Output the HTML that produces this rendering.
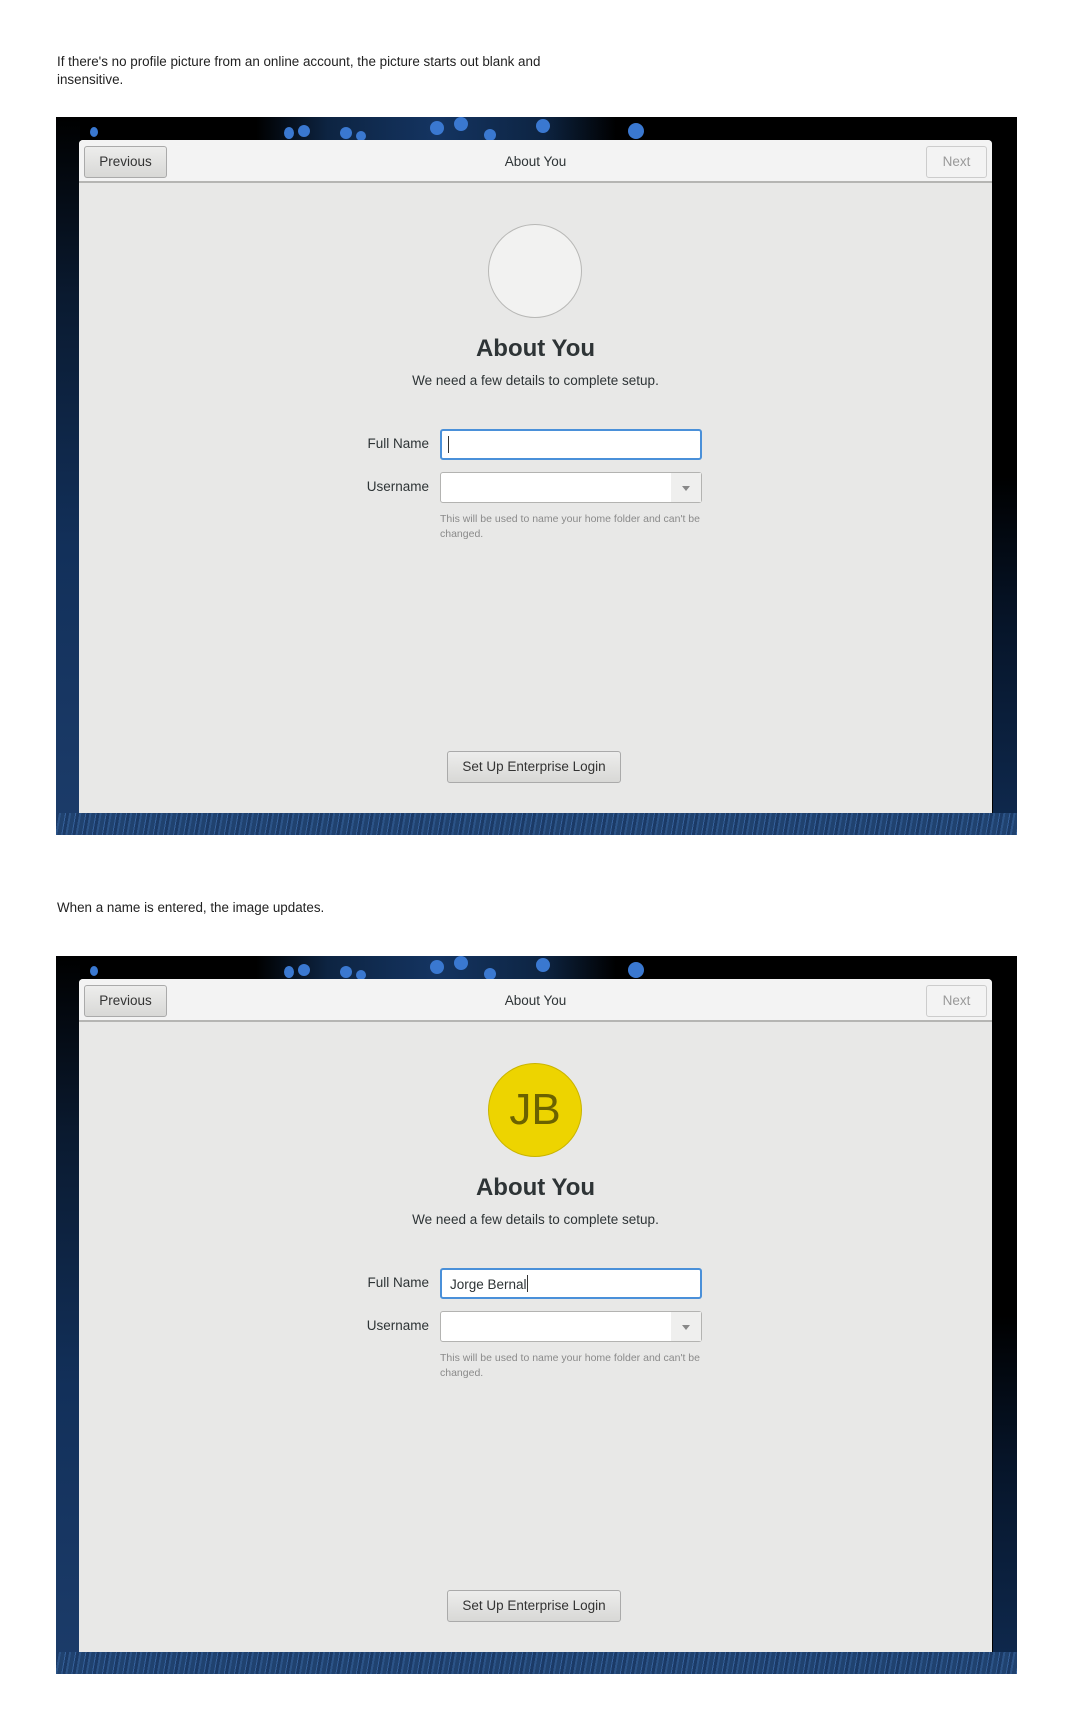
<!DOCTYPE html>
<html><head><meta charset="utf-8"><style>
*{margin:0;padding:0;box-sizing:border-box}
body{width:1072px;height:1731px;background:#fff;position:relative;font-family:"Liberation Sans","DejaVu Sans",sans-serif;overflow:hidden}
.cap{position:absolute;left:57px;font-size:13.4px;line-height:18px;color:#222}
.shot{position:absolute;left:56px;width:961px;height:718px;background:#000;overflow:hidden}
.lstrip{position:absolute;left:0;top:0;width:24px;height:100%;background:linear-gradient(180deg,#000 0%,#0a1a30 25%,#12305a 60%,#1c3c6a 100%)}
.bstrip{position:absolute;left:0;bottom:0;width:100%;height:22px;background:repeating-linear-gradient(100deg,#1b3a66 0 3px,#2c5488 3px 5px,#20426f 5px 9px,#35609a 9px 10px)}
.rstrip{position:absolute;right:0;top:0;width:24px;height:100%;background:linear-gradient(180deg,#000 0%,#000 50%,#061428 70%,#0f2a50 100%)}
.dot{position:absolute;border-radius:50%;background:#3a78d0}
.haze{position:absolute;top:0;left:200px;width:360px;height:24px;background:linear-gradient(90deg,transparent,#0d2442 20%,#143461 50%,#0d2442 80%,transparent)}
.dlg{position:absolute;left:23px;top:23px;width:913px;height:673px;background:#e8e8e7;border-radius:4px 4px 0 0}
.hdr{position:absolute;left:0;top:0;width:100%;height:43px;background:#f3f3f3;border-bottom:2px solid #b5b5b3;border-radius:4px 4px 0 0}
.btn{position:absolute;height:32px;border:1px solid #aaa;border-radius:3px;font-size:13.5px;color:#333;text-align:center;line-height:30px;background:linear-gradient(#ededec,#d8d8d6)}
.ttl{position:absolute;left:0;width:100%;top:14px;text-align:center;font-size:13.5px;color:#2e3436}
.av{position:absolute;left:409px;width:94px;height:94px;border-radius:50%;top:84px}
.h1{position:absolute;left:0;width:100%;top:195px;text-align:center;font-size:24px;font-weight:bold;color:#2e3436}
.sub{position:absolute;left:0;width:100%;top:233px;text-align:center;font-size:13.5px;color:#2e3436}
.lbl{position:absolute;right:563px;font-size:13.5px;color:#2e3436}
.in{position:absolute;left:361px;width:262px;height:31px;background:#fff;border-radius:3px}
.help{position:absolute;left:361px;top:372px;width:270px;font-size:10.5px;line-height:15px;color:#8a8a8a}
</style></head><body>

<div class="cap" style="top:53px">If there's no profile picture from an online account, the picture starts out blank and<br>insensitive.</div>
<div class="cap" style="top:899px">When a name is entered, the image updates.</div>

<!-- shot 1 -->
<div class="shot" style="top:117px">
<div class="lstrip"></div><div class="rstrip"></div><div class="bstrip"></div><div class="haze"></div>
<div class="dot" style="left:34px;top:10px;width:8px;height:10px"></div>
<div class="dot" style="left:228px;top:10px;width:10px;height:12px"></div>
<div class="dot" style="left:242px;top:8px;width:12px;height:12px"></div>
<div class="dot" style="left:284px;top:10px;width:12px;height:12px"></div>
<div class="dot" style="left:300px;top:14px;width:10px;height:10px"></div>
<div class="dot" style="left:374px;top:4px;width:14px;height:14px"></div>
<div class="dot" style="left:398px;top:0px;width:14px;height:14px"></div>
<div class="dot" style="left:428px;top:12px;width:12px;height:12px"></div>
<div class="dot" style="left:480px;top:2px;width:14px;height:14px"></div>
<div class="dot" style="left:572px;top:6px;width:16px;height:16px"></div>
<div class="dlg">
<div class="hdr"><div class="btn" style="left:5px;top:6px;width:83px">Previous</div><div class="ttl">About You</div>
<div class="btn" style="right:5px;top:6px;width:61px;color:#999;background:#f3f3f3;border-color:#ccc">Next</div></div>
<div class="av" style="background:#f2f2f1;border:1px solid #b8b8b6"></div>
<div class="h1">About You</div>
<div class="sub">We need a few details to complete setup.</div>
<div class="lbl" style="top:296px">Full Name</div>
<div class="in" style="top:289px;border:2px solid #4a90d9"><div style="position:absolute;left:6px;top:5px;width:1px;height:17px;background:#333"></div></div>
<div class="lbl" style="top:339px">Username</div>
<div class="in" style="top:332px;border:1px solid #b3b3b1"><div style="position:absolute;right:0;top:0;width:30px;height:100%;background:#efefee"></div><div style="position:absolute;right:11px;top:13px;border:4px solid transparent;border-top:5px solid #888;border-bottom:0"></div></div>
<div class="help">This will be used to name your home folder and can't be changed.</div>
<div class="btn" style="left:368px;top:611px;width:174px">Set Up Enterprise Login</div>
</div>
</div>

<!-- shot 2 -->
<div class="shot" style="top:956px">
<div class="lstrip"></div><div class="rstrip"></div><div class="bstrip"></div><div class="haze"></div>
<div class="dot" style="left:34px;top:10px;width:8px;height:10px"></div>
<div class="dot" style="left:228px;top:10px;width:10px;height:12px"></div>
<div class="dot" style="left:242px;top:8px;width:12px;height:12px"></div>
<div class="dot" style="left:284px;top:10px;width:12px;height:12px"></div>
<div class="dot" style="left:300px;top:14px;width:10px;height:10px"></div>
<div class="dot" style="left:374px;top:4px;width:14px;height:14px"></div>
<div class="dot" style="left:398px;top:0px;width:14px;height:14px"></div>
<div class="dot" style="left:428px;top:12px;width:12px;height:12px"></div>
<div class="dot" style="left:480px;top:2px;width:14px;height:14px"></div>
<div class="dot" style="left:572px;top:6px;width:16px;height:16px"></div>
<div class="dlg">
<div class="hdr"><div class="btn" style="left:5px;top:6px;width:83px">Previous</div><div class="ttl">About You</div>
<div class="btn" style="right:5px;top:6px;width:61px;color:#999;background:#f3f3f3;border-color:#ccc">Next</div></div>
<div class="av" style="background:#edd400;border:1px solid #c9b400;text-align:center;line-height:92px;font-size:44px;color:#6b6200;font-weight:300">JB</div>
<div class="h1">About You</div>
<div class="sub">We need a few details to complete setup.</div>
<div class="lbl" style="top:296px">Full Name</div>
<div class="in" style="top:289px;border:2px solid #4a90d9;font-size:13.5px;color:#2e3436;padding:5px 0 0 8px">Jorge Bernal<span style="display:inline-block;width:1px;height:17px;background:#333;vertical-align:-3px"></span></div>
<div class="lbl" style="top:339px">Username</div>
<div class="in" style="top:332px;border:1px solid #b3b3b1"><div style="position:absolute;right:0;top:0;width:30px;height:100%;background:#efefee"></div><div style="position:absolute;right:11px;top:13px;border:4px solid transparent;border-top:5px solid #888;border-bottom:0"></div></div>
<div class="help">This will be used to name your home folder and can't be changed.</div>
<div class="btn" style="left:368px;top:611px;width:174px">Set Up Enterprise Login</div>
</div>
</div>

</body></html>
